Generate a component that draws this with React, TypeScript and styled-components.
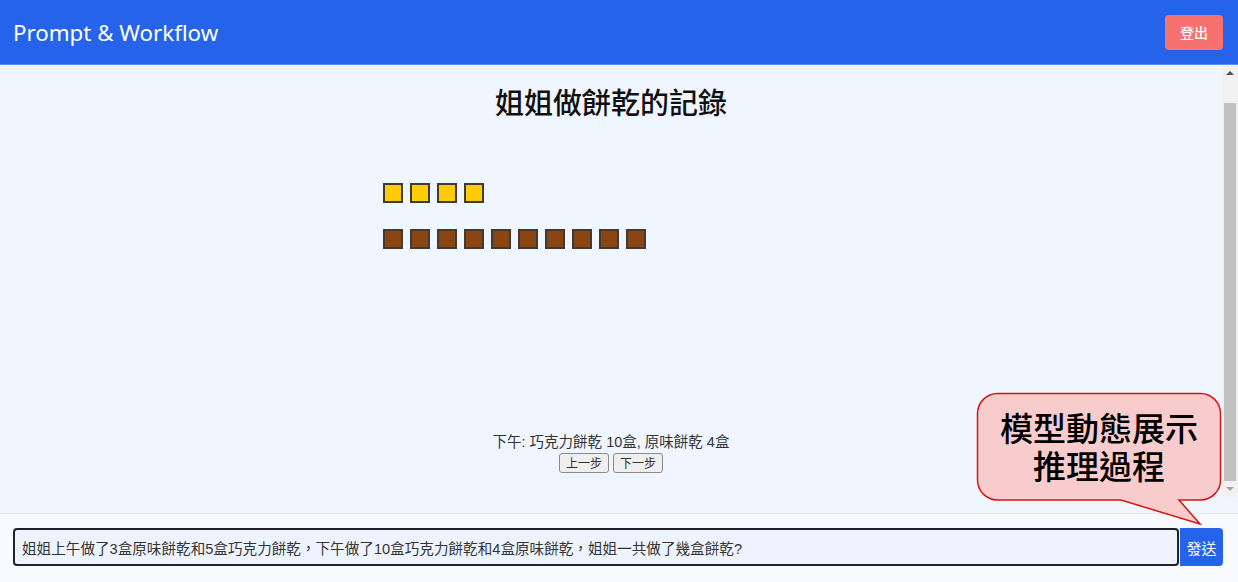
import React from "react";
import styled, { createGlobalStyle } from "styled-components";

const GlobalStyle = createGlobalStyle`
  html, body {
    margin: 0;
    padding: 0;
    height: 100%;
    overflow: hidden;
  }
  body {
    font-family: "Noto Sans", "Noto Sans CJK TC", sans-serif;
    background: #eff6ff;
  }
  #root { height: 100%; }
`;

const Page = styled.div`
  position: relative;
  height: 100%;
  display: flex;
  flex-direction: column;
`;

const Header = styled.header`
  flex: 0 0 64px;
  background: #2563eb;
  display: flex;
  align-items: center;
  justify-content: space-between;
  padding: 0 15px 0 13px;
  border-bottom: 1px solid #5b8ef0;
`;

const Brand = styled.h1`
  margin: 0;
  color: #ffffff;
  font-family: "Noto Sans", sans-serif;
  font-size: 22.3px;
  font-weight: 400;
`;

const LogoutButton = styled.button`
  width: 58px;
  height: 35px;
  border: none;
  border-radius: 4px;
  background: #f87171;
  color: #ffffff;
  font-family: "Noto Sans CJK TC", sans-serif;
  font-size: 14px;
  font-weight: 500;
  padding: 0;
`;

const Main = styled.main`
  flex: 1 1 auto;
  min-height: 0;
  display: flex;
  flex-direction: column;
  background: #eff6ff;
  padding-bottom: 16px;
`;

const Viewport = styled.div`
  flex: 1 1 auto;
  min-height: 0;
  display: flex;
`;

const Content = styled.div`
  flex: 1 1 auto;
  min-width: 0;
  overflow: hidden;
  display: flex;
  flex-direction: column;
  align-items: center;
`;

const ScrollTrack = styled.div`
  flex: 0 0 16px;
  background: #f1f1f1;
  display: flex;
  flex-direction: column;
`;

const ScrollArrow = styled.div<{ $dir: "up" | "down" }>`
  flex: 0 0 16px;
  display: flex;
  align-items: center;
  justify-content: center;

  &::before {
    content: "";
    width: 0;
    height: 0;
    border-left: 4px solid transparent;
    border-right: 4px solid transparent;
    ${(p) =>
      p.$dir === "up"
        ? "border-bottom: 4px solid #505050;"
        : "border-top: 4px solid #a3a3a3;"}
  }
`;

const ScrollThumb = styled.div`
  flex: 1 1 auto;
  margin: 22px 2px 0;
  background: #c1c1c1;
`;

const Title = styled.h2`
  margin: 19px 0 0;
  line-height: 34px;
  font-family: "Noto Sans CJK TC", sans-serif;
  font-size: 29px;
  font-weight: 500;
  color: #111111;
`;

const Board = styled.div`
  margin-top: 65px;
  width: 456px;
  height: 250px;
  display: flex;
  flex-direction: column;
  gap: 26px;
  flex-shrink: 0;
`;

const BoxRow = styled.div`
  display: flex;
  gap: 7px;
`;

const Box = styled.span<{ $color: string }>`
  width: 20px;
  height: 20px;
  box-sizing: border-box;
  border: 2px solid #3f3a33;
  background: ${(p) => p.$color};
`;

const Caption = styled.div`
  font-family: "Liberation Sans", "Noto Sans CJK TC", sans-serif;
  font-size: 14.5px;
  line-height: 18px;
  color: #333333;
  flex-shrink: 0;
`;

const StepRow = styled.div`
  margin-top: 2px;
  display: flex;
  gap: 4px;
  flex-shrink: 0;
`;

const StepButton = styled.button`
  height: 20px;
  padding: 0 6px;
  font-family: "Noto Sans CJK TC", sans-serif;
  font-size: 12px;
  line-height: 16px;
  color: #333;
  background: #efefef;
  border: 1px solid #8a8a8a;
  border-radius: 3px;
`;

const InputBar = styled.footer`
  flex: 0 0 69px;
  box-sizing: border-box;
  border-top: 1px solid #e3e8ef;
  background: #f8fafc;
  display: flex;
  align-items: flex-start;
  padding: 14px 15px 0 13px;
`;

const PromptInput = styled.input`
  flex: 1 1 auto;
  height: 38px;
  box-sizing: border-box;
  border: 2px solid #1f2328;
  border-radius: 4px;
  background: #eef4ff;
  padding: 0 7px;
  font-family: "Liberation Sans", "Noto Sans CJK TC", sans-serif;
  font-size: 14.6px;
  color: #333333;
  outline: none;
`;

const SendButton = styled.button`
  flex: 0 0 43px;
  height: 38px;
  margin-left: 1px;
  border: none;
  border-radius: 0 4px 4px 0;
  background: #2563eb;
  color: #ffffff;
  font-family: "Noto Sans CJK TC", sans-serif;
  font-size: 15px;
  padding: 0;
`;

const Callout = styled.div`
  position: absolute;
  left: 976px;
  top: 392px;
  width: 248px;
  height: 136px;
`;

const CalloutShape = styled.svg`
  position: absolute;
  inset: 0;
`;

const CalloutText = styled.div`
  position: relative;
  width: 246px;
  padding-top: 16px;
  text-align: center;
  font-family: "Noto Sans CJK TC", sans-serif;
  font-size: 33px;
  font-weight: 500;
  line-height: 38px;
  color: #000000;
`;

export default function App() {
  const yellow = Array.from({ length: 4 });
  const brown = Array.from({ length: 10 });

  return (
    <>
      <GlobalStyle />
      <Page>
        <Header>
          <Brand>Prompt &amp; Workflow</Brand>
          <LogoutButton>登出</LogoutButton>
        </Header>
        <Main>
          <Viewport>
            <Content>
              <Title>姐姐做餅乾的記錄</Title>
              <Board>
                <BoxRow>
                  {yellow.map((_, i) => (
                    <Box key={i} $color="#ffcc00" />
                  ))}
                </BoxRow>
                <BoxRow>
                  {brown.map((_, i) => (
                    <Box key={i} $color="#8b4513" />
                  ))}
                </BoxRow>
              </Board>
              <Caption>下午: 巧克力餅乾 10盒, 原味餅乾 4盒</Caption>
              <StepRow>
                <StepButton>上一步</StepButton>
                <StepButton>下一步</StepButton>
              </StepRow>
            </Content>
            <ScrollTrack>
              <ScrollArrow $dir="up" />
              <ScrollThumb />
              <ScrollArrow $dir="down" />
            </ScrollTrack>
          </Viewport>
        </Main>
        <InputBar>
          <PromptInput
            defaultValue="姐姐上午做了3盒原味餅乾和5盒巧克力餅乾，下午做了10盒巧克力餅乾和4盒原味餅乾，姐姐一共做了幾盒餅乾?"
          />
          <SendButton>發送</SendButton>
        </InputBar>
        <Callout>
          <CalloutShape width="248" height="136" viewBox="0 0 248 136">
            <path
              d="M 21.5 1.5 H 224.5 A 20 20 0 0 1 244.5 21.5 V 88 A 20 20 0 0 1 224.5 108 H 203 L 224 132 L 145 108 H 21.5 A 20 20 0 0 1 1.5 88 V 21.5 A 20 20 0 0 1 21.5 1.5 Z"
              fill="#f8cccc"
              stroke="#d81515"
              strokeWidth="1.5"
              strokeLinejoin="miter"
            />
          </CalloutShape>
          <CalloutText>
            模型動態展示
            <br />
            推理過程
          </CalloutText>
        </Callout>
      </Page>
    </>
  );
}
